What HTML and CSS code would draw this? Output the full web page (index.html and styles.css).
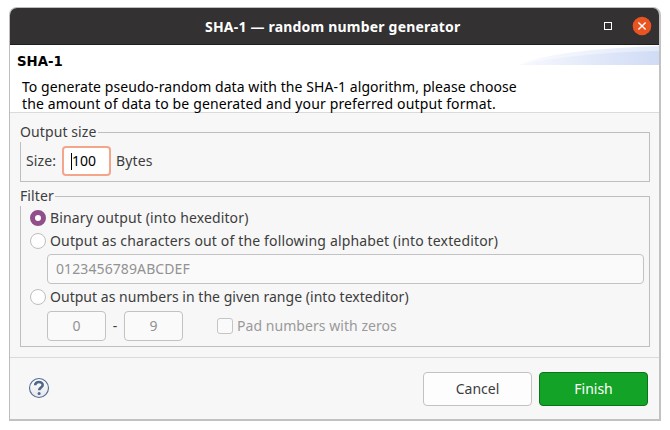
FILE: index.html
```html
<!DOCTYPE html>
<html lang="en">
<head>
<meta charset="utf-8">
<title>SHA-1 — random number generator</title>
<link rel="stylesheet" href="styles.css">
</head>
<body>
<main class="window">
  <header class="titlebar">
    <h1 class="title"><span>SHA-1 — random number generator</span></h1>
    <div class="controls">
      <i class="maximize"></i>
      <svg class="close" width="20" height="20" viewBox="0 0 20 20"><circle cx="10" cy="10" r="9.3" fill="#e95420"/><path d="M6.4 6.4l7.2 7.2M13.6 6.4l-7.2 7.2" stroke="#fff" stroke-width="1.4"/></svg>
    </div>
  </header>
  <section class="banner">
    <svg class="swoosh" width="140" height="20" viewBox="0 0 140 20">
      <defs><linearGradient id="a"><stop offset="0" stop-color="#fafbfe"/><stop offset="1" stop-color="#e1e9f9"/></linearGradient><linearGradient id="b"><stop offset="0" stop-color="#f7f9fe"/><stop offset="1" stop-color="#d0dbf5"/></linearGradient></defs>
      <path d="M0 20C30 7 85 3 140 1V20Z" fill="url(#a)"/>
      <path d="M0 20C40 11 90 7 140 6V20Z" fill="url(#b)"/>
    </svg>
    <h2 class="heading"><span>SHA-1</span></h2>
    <p class="intro"><span class="line1">To generate pseudo-random data with the SHA-1 algorithm, please choose</span> <span class="line2">the amount of data to be generated and your preferred output format.</span></p>
  </section>
  <section class="content">
    <div class="group size-group">
      <div class="legend"><span>Output size</span></div>
      <div class="row size-row"><span>Size:</span><div class="field size-field"><i class="caret"></i><span>100</span></div><span>Bytes</span></div>
    </div>
    <div class="group filter-group">
      <div class="legend"><span>Filter</span></div>
      <div class="row option"><i class="radio checked"></i><span class="o1">Binary output (into hexeditor)</span></div>
      <div class="row option second"><i class="radio"></i><span class="o2">Output as characters out of the following alphabet (into texteditor)</span></div>
      <div class="field alphabet"><span>0123456789ABCDEF</span></div>
      <div class="row option third"><i class="radio"></i><span class="o3">Output as numbers in the given range (into texteditor)</span></div>
      <div class="row range"><div class="field number">0</div><span class="dash">-</span><div class="field number">9</div><i class="check"></i><span class="pad">Pad numbers with zeros</span></div>
    </div>
  </section>
  <footer class="footer">
    <svg class="help" width="22" height="22" viewBox="0 0 22 22"><defs><linearGradient id="h" x2="0" y2="1"><stop stop-color="#fff"/><stop offset="1" stop-color="#e4e6ea"/></linearGradient></defs><circle cx="11" cy="11" r="9.5" fill="url(#h)" stroke="#526b91" stroke-width="1.1"/><path d="M7.2 8.3C7.3 3.9 14.8 4 14.7 8c0 2.5-3.5 2.6-3.5 5.3" fill="none" stroke="#506689" stroke-width="2.6"/><circle cx="11.1" cy="16.4" r="1.5" fill="#506689"/></svg>
    <div class="actions"><button class="button"><span>Cancel</span></button><button class="button primary"><span>Finish</span></button></div>
  </footer>
</main>
</body>
</html>
```
FILE: styles.css
```css
* { box-sizing: border-box; }
body { margin: 0; background: #fff; color: #3d3d3d; font: 14px/20px "Noto Sans", "Open Sans", sans-serif; white-space: nowrap; }
h1, h2, p { margin: 0; }
.window { width: 652px; height: 414px; margin: 7px 0 0 9px; border: 1px solid #bdbdbd; border-right: 2px solid #c2c2c2; border-bottom: 2px solid #c2c2c2; border-radius: 8px 8px 0 0; background: #f7f7f7; overflow: hidden; }
.titlebar { display: grid; grid-template-columns: 1fr; height: 37px; align-items: center; background: #333132; border-bottom: 1px solid #1f1e1f; color: #fff; }
.title { grid-area: 1/1; padding: 1px 0 0 195px; font-size: 14px; line-height: 20px; font-weight: 700; letter-spacing: 0.2px; }
.controls { grid-area: 1/1; justify-self: end; display: flex; align-items: center; gap: 20px; padding-right: 7px; }
.maximize { width: 8px; height: 8px; border: 1px solid #fff; }
.banner { position: relative; height: 68px; padding: 6px 0 0 7px; background: #fff; border-bottom: 1px solid #dadada; color: #000; }
.swoosh { position: absolute; top: 0; right: 0; }
.heading { font: 700 13.3px/20px "DejaVu Sans", sans-serif; padding-top: 1px; }
.intro { padding: 6px 0 0 5px; line-height: 17px; }
.intro span { display: block; height: 17px; }
.line1 { letter-spacing: 0.07px; }
.line2 { letter-spacing: 0.13px; }
.content { height: 245px; padding: 19px 9px 0 10px; border-bottom: 1px solid #dadada; }
.group { border: 1px solid #bebebe; }
.size-group { height: 50px; }
.filter-group { height: 151px; margin-top: 14px; }
.legend { display: flex; width: max-content; height: 20px; margin: -11px 0 -9px -1px; padding-right: 1px; background: #f7f7f7; letter-spacing: 0.1px; }
.row { display: flex; align-items: center; }
.size-row { height: 30px; margin-top: 13px; padding-left: 5px; gap: 5px; }
.size-row > span:first-child { width: 31px; letter-spacing: 0.15px; }
.size-row > span:last-child { letter-spacing: 0.15px; }
.field { display: flex; align-items: center; height: 30px; border: 1px solid #c2c2c2; border-radius: 4px; background: #fafafa; color: #929292; }
.size-field { width: 49px; padding-left: 7px; border: 2px solid #f4a68b; background: #fff; color: #000; }
.caret { width: 1px; height: 17px; background: #000; }
.option { height: 22px; padding-left: 9px; gap: 4px; }
.o1 { letter-spacing: 0.13px; }
.o2 { letter-spacing: 0.155px; }
.o3 { letter-spacing: 0.03px; }
.radio { width: 16px; height: 16px; border: 1px solid #bebebe; border-radius: 50%; background: #fff; }
.radio.checked { border: 5px solid #924d8b; }
.filter-group .option:nth-child(2) { margin-top: 10px; }
.second { margin-top: 1px; }
.alphabet { width: 597px; margin: 2px 0 0 26px; padding-left: 8px; letter-spacing: 0.1px; }
.third { margin-top: 2px; }
.range { padding-left: 26px; margin-top: 3px; }
.number { width: 59px; justify-content: center; }
.dash { width: 18px; text-align: center; }
.check { width: 16px; height: 16px; margin: 0 4px 0 34px; border: 1px solid #c5c5c5; border-radius: 3px; background: #fafafa; }
.pad { color: #9a9a9a; letter-spacing: 0.05px; }
.footer { display: flex; justify-content: space-between; align-items: center; height: 60px; padding: 2px 11px 0 18px; }
.help { margin-top: -3px; }
.actions { display: flex; gap: 7px; }
.button { width: 109px; height: 34px; border: 1px solid #c2c2c2; border-radius: 4px; background: #fdfdfd; color: #3d3d3d; font: inherit; padding: 0; }
.primary { background: #13a427; border-color: #0d7319; color: #fff; }
```
